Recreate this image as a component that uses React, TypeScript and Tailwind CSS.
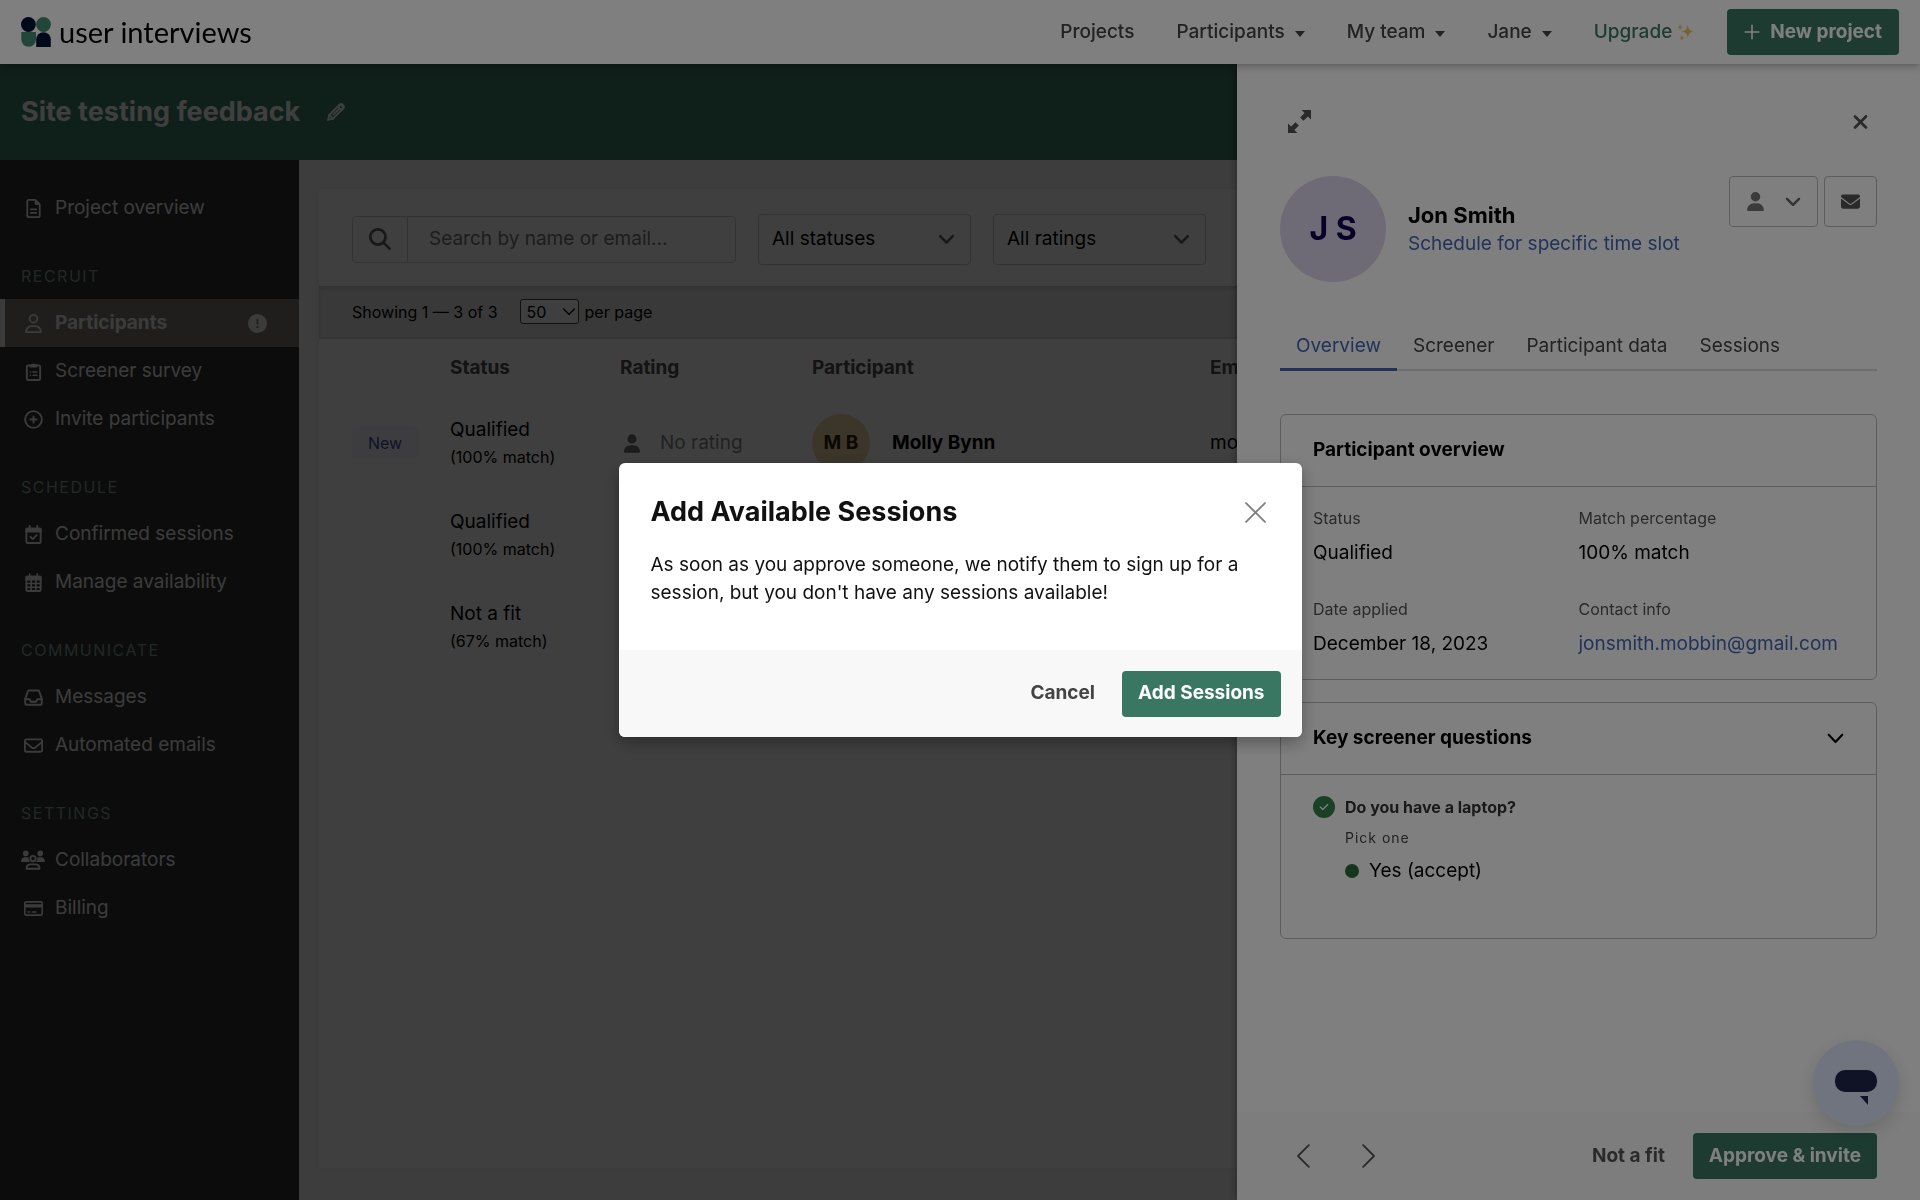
import React, { useState } from 'react';
import {
  FaCheck,
  FaCircleExclamation,
  FaEnvelope,
  FaMagnifyingGlass,
  FaRegCreditCard,
  FaRegEnvelope,
  FaRegFileLines,
  FaRegUser,
  FaUser,
  FaXmark,
} from 'react-icons/fa6';

type IconProps = { className?: string };

const Stroke: React.FC<IconProps & { children: React.ReactNode; width?: number }> = ({
  className,
  children,
  width = 2,
}) => (
  <svg
    viewBox="0 0 20 20"
    className={className}
    fill="none"
    stroke="currentColor"
    strokeWidth={width}
    strokeLinecap="round"
    strokeLinejoin="round"
    aria-hidden="true"
  >
    {children}
  </svg>
);

const ChevronIcon = ({ className }: IconProps) => (
  <Stroke className={className} width={3}>
    <path d="m2.500 6 7.500 7.500 7.500-7.500" />
  </Stroke>
);

const ClipboardIcon = ({ className }: IconProps) => (
  <Stroke className={className}>
    <rect x="3" y="3.5" width="14" height="15.5" rx="1.5" />
    <path d="M6.5 5V3.5h1.7a1.9 1.9 0 0 1 3.6 0h1.7V5z" fill="currentColor" strokeWidth={1.5} />
    <path d="M6.6 10.5h.2M9.5 10.5h4M6.6 14h.2M9.5 14h4" strokeWidth={1.6} />
  </Stroke>
);

const CirclePlusIcon = ({ className }: IconProps) => (
  <Stroke className={className}>
    <circle cx="10" cy="10" r="8.8" />
    <path d="M10 6.7v6.6M6.7 10h6.6" />
  </Stroke>
);

const CalendarCheckIcon = ({ className }: IconProps) => (
  <Stroke className={className}>
    <rect x="2.5" y="4" width="15" height="15" rx="1.5" />
    <path d="M2.5 4h15v3h-15z" fill="currentColor" />
    <path d="M6 1v3M14 1v3M6.8 12.5l2.3 2.3 4.2-4.2" />
  </Stroke>
);

const CalendarGridIcon = ({ className }: IconProps) => (
  <Stroke className={className}>
    <rect x="2.5" y="4" width="15" height="15" rx="1.5" />
    <path d="M2.5 4h15v3h-15z" fill="currentColor" />
    <path d="M6 1v3M14 1v3M2.5 11h15M2.5 15h15M7.5 7v12M12.5 7v12" strokeWidth={1.7} />
  </Stroke>
);

const InboxIcon = ({ className }: IconProps) => (
  <Stroke className={className}>
    <path d="M1.3 11.5 4 3.6a1.4 1.4 0 0 1 1.3-.9h9.4a1.4 1.4 0 0 1 1.3.9l2.7 7.9v4.8a1.3 1.3 0 0 1-1.3 1.3H2.6a1.3 1.3 0 0 1-1.3-1.3z" />
    <path d="M1.3 11.8h4.6l1.4 2.6h5.4l1.4-2.6h4.6" />
  </Stroke>
);

const UsersIcon = ({ className }: IconProps) => (
  <svg viewBox="0 0 24 20" className={className} fill="currentColor" aria-hidden="true">
    <circle cx="4.8" cy="3.4" r="2.8" />
    <circle cx="19.2" cy="3.4" r="2.8" />
    <path d="M0 12c0-2.800 1.500-4.800 4-4.800h2c.6 0 1.100.1 1.600.4A5 5 0 0 0 9 12zM24 12c0-2.800-1.500-4.800-4-4.800h-2c-.6 0-1.100.1-1.600.4A5 5 0 0 1 15 12z" />
    <g fill="none" stroke="currentColor" strokeWidth="1.9" strokeLinejoin="round">
      <circle cx="12" cy="8.600" r="2.700" />
      <path d="M5.500 18.800c0-2.600 1.700-4.400 4.200-4.400h4.600c2.500 0 4.200 1.800 4.200 4.400z" />
    </g>
  </svg>
);

const PencilIcon = ({ className }: IconProps) => (
  <Stroke className={className} width={1.8}>
    <path d="m2 18 1.300-5L13.800 2.500a1.800 1.800 0 0 1 2.500 0l1.200 1.200a1.800 1.800 0 0 1 0 2.500L7 16.700z" />
    <path d="m12 4.500 3.500 3.500 2-2.500-3-3zM7.500 12.500l5-5M3.300 13 7 16.700" />
  </Stroke>
);

const ExpandIcon = ({ className }: IconProps) => (
  <svg viewBox="0 0 22 22" className={className} aria-hidden="true">
    <path d="M13 0h9v9l-2.900-2.900-4.300 4.300-3.200-3.200 4.300-4.300zM9 22H0v-9l2.900 2.900 4.300-4.300 3.200 3.200-4.300 4.300z" fill="currentColor" />
  </svg>
);

const SparklesIcon = ({ className }: IconProps) => (
  <svg viewBox="0 0 20 20" className={className} fill="#e8c865" aria-hidden="true">
    <path d="M12.500 2c1 5.500 2 6.500 7.500 7.500-5.500 1-6.500 2-7.500 7.500-1-5.500-2-6.500-7.500-7.500 5.500-1 6.500-2 7.500-7.500zM4 1c.5 2.500 1 3 3.500 3.500C5 5 4.500 5.500 4 8 3.500 5.500 3 5 .5 4.500 3 4 3.500 3.500 4 1zM6 13c.5 2.600 1 3 3.300 3.500C7 17 6.500 17.500 6 20c-.5-2.500-1-3-3.300-3.500C5 16 5.500 15.600 6 13z" />
  </svg>
);

const LogoMark = () => (
  <svg viewBox="0 0 30 30" className="h-[30px] w-[30px]" aria-hidden="true">
    <circle cx="7.400" cy="7.500" r="7.400" fill="#001234" />
    <circle cx="22.500" cy="7.500" r="7.400" fill="#458c70" />
    <path d="M.3 15H15v7.500a7.350 7.350 0 0 1-14.700 0z" fill="#458c70" />
    <path d="M15.200 30v-7.500a7.300 7.300 0 0 1 14.600 0V30z" fill="#001234" />
  </svg>
);

interface NavItem {
  label: string;
  icon: React.ComponentType<IconProps>;
  active?: boolean;
}

const sections: { title?: string; items: NavItem[] }[] = [
  { items: [{ label: 'Project overview', icon: FaRegFileLines }] },
  {
    title: 'Recruit',
    items: [
      { label: 'Participants', icon: FaRegUser, active: true },
      { label: 'Screener survey', icon: ClipboardIcon },
      { label: 'Invite participants', icon: CirclePlusIcon },
    ],
  },
  {
    title: 'Schedule',
    items: [
      { label: 'Confirmed sessions', icon: CalendarCheckIcon },
      { label: 'Manage availability', icon: CalendarGridIcon },
    ],
  },
  {
    title: 'Communicate',
    items: [
      { label: 'Messages', icon: InboxIcon },
      { label: 'Automated emails', icon: FaRegEnvelope },
    ],
  },
  {
    title: 'Settings',
    items: [
      { label: 'Collaborators', icon: UsersIcon },
      { label: 'Billing', icon: FaRegCreditCard },
    ],
  },
];

const rows = [
  { status: 'Qualified', match: '(100% match)', isNew: true, name: 'Molly Bynn', initials: 'M B', email: 'mo…' },
  { status: 'Qualified', match: '(100% match)' },
  { status: 'Not a fit', match: '(67% match)' },
];

const tabs = ['Overview', 'Screener', 'Participant data', 'Sessions'];

const Caret = () => (
  <span className="mt-1 border-x-[5px] border-t-[6px] border-x-transparent border-t-current" />
);

const Header = () => (
  <header className="relative z-30 flex h-16 shrink-0 items-center justify-between bg-white px-[21px] shadow-[0_2px_8px_rgba(0,0,0,0.3)]">
    <a href="#home" className="flex items-center gap-2 font-['Lato',sans-serif] text-[29px] leading-8 text-black">
      <LogoMark />
      user interviews
    </a>
    <nav className="flex items-center text-[19px] font-medium text-[#444]">
      <a href="#projects" className="mr-[42px]">Projects</a>
      <button className="mr-[42px] flex items-center gap-2.5">Participants <Caret /></button>
      <button className="mr-[42px] flex items-center gap-2.5">My team <Caret /></button>
      <button className="mr-[42px] flex items-center gap-2.5">Jane <Caret /></button>
      <a href="#upgrade" className="mr-8 flex items-center gap-1 text-[#3a7a64]">
        Upgrade <SparklesIcon className="h-[18px] w-[19px]" />
      </a>
      <button className="flex h-[46px] items-center gap-2.5 rounded bg-[#3a7763] px-[17px] font-bold text-white">
        <Stroke className="h-4 w-4"><path d="M10 1.500v17M1.500 10h17" /></Stroke>
        New project
      </button>
    </nav>
  </header>
);

const Sidebar = () => (
  <nav className="w-[299px] shrink-0 bg-[#303030] pt-6 text-[19px] text-[#efefef]">
    {sections.map((section) => (
      <section key={section.items[0].label}>
        {section.title && (
          <h2 className="px-[21px] pt-[33px] pb-3 text-[16px] leading-[22px] tracking-[1.5px] text-[#86a097] uppercase">
            {section.title}
          </h2>
        )}
        {section.items.map(({ label, icon: Icon, active }) => (
          <a
            key={label}
            href="#nav"
            className={
              active
                ? 'flex h-12 items-center border-l-[5px] border-[#efefef] bg-[#7c7b76] pr-8 pl-4 font-bold'
                : 'flex h-12 items-center pr-8 pl-[21px]'
            }
          >
            <span className="mr-[10px] flex w-6 justify-center">
              <Icon className={label === 'Collaborators' ? 'h-5 w-6' : 'h-[19px] w-auto min-w-[15px]'} />
            </span>
            {label}
            {active && <FaCircleExclamation className="ml-auto h-[19px] w-[19px]" />}
          </a>
        ))}
      </section>
    ))}
  </nav>
);

const FilterSelect: React.FC<{ label: string }> = ({ label }) => (
  <div className="relative w-[213px]">
    <select
      aria-label={label}
      className="h-[51px] w-full appearance-none rounded border border-[#ccc] bg-white pl-[13px] text-[19px] text-black"
    >
      <option>{label}</option>
    </select>
    <ChevronIcon className="pointer-events-none absolute top-[17px] right-4 h-[17px] w-[17px] text-[#666]" />
  </div>
);

const ParticipantList = () => (
  <main className="flex min-w-0 flex-1 flex-col bg-[#f5f5f5] px-5 pt-[29px] pb-8">
    <div className="flex-1 overflow-hidden rounded bg-white shadow-[0_0_6px_rgba(0,0,0,0.06)]">
      <div className="flex h-[97px] items-center gap-[22px] px-[33px] pt-[3px]">
        <div className="flex h-[47px] w-[384px] rounded border border-[#ccc]">
          <button aria-label="Search" className="flex w-[55px] items-center justify-center border-r border-[#ccc] text-[#666]">
            <FaMagnifyingGlass className="h-[22px] w-[22px]" />
          </button>
          <input
            type="search"
            aria-label="Search by name or email"
            placeholder="Search by name or email..."
            className="min-w-0 flex-1 px-[21px] text-[19px] placeholder:text-[#757575]"
          />
        </div>
        <FilterSelect label="All statuses" />
        <FilterSelect label="All ratings" />
      </div>
      <div className="flex h-[53px] items-center border-b-2 border-[#d0d0d0] bg-[#e4e4e4] px-[33px] text-[16px] text-black shadow-[inset_0_3px_3px_rgba(0,0,0,0.1)]">
        Showing 1 — 3 of 3
        <div className="relative mr-1.5 ml-[22px]">
          <select id="per-page" className="block h-[25px] w-[59px] appearance-none rounded-[3px] border border-[#444] bg-white pl-1.5 text-[16px] leading-[22px]">
            <option>50</option>
          </select>
          <Stroke className="pointer-events-none absolute top-[7px] right-1 h-3 w-3" width={2.2}>
            <path d="M1 5l9 9 9-9" />
          </Stroke>
        </div>
        <label htmlFor="per-page">per page</label>
      </div>
      <table className="w-full min-w-[1580px] table-fixed text-left text-[19px] text-black">
        <colgroup>
          <col className="w-[131px]" />
          <col className="w-[170px]" />
          <col className="w-[192px]" />
          <col className="w-[398px]" />
          <col />
        </colgroup>
        <thead>
          <tr className="h-[58px] text-[#4c4c4c]">
            <td />
            <th scope="col">Status</th>
            <th scope="col">Rating</th>
            <th scope="col">Participant</th>
            <th scope="col">Email</th>
          </tr>
        </thead>
        <tbody>
          {rows.map((row, i) => (
            <tr key={i} className="h-[92px]">
              <td className="pl-[33px]">
                {row.isNew && (
                  <span className="inline-block rounded bg-[#f5f6fc] px-4 py-1 text-[16px] leading-6 text-[#43489f]">New</span>
                )}
              </td>
              <td>
                <div className="leading-7">{row.status}</div>
                <div className="text-[16px] leading-[26px]">{row.match}</div>
              </td>
              <td>
                {row.name && (
                  <span className="flex items-center gap-5 pl-1 text-[#868686]">
                    <FaUser className="h-[19px] w-4 text-[#707070]" /> No rating
                  </span>
                )}
              </td>
              <td>
                {row.name && (
                  <span className="flex items-center gap-[22px] font-bold">
                    <span className="flex h-[58px] w-[58px] items-center justify-center rounded-full bg-[#f0d8a8] text-[#332200]">
                      {row.initials}
                    </span>
                    {row.name}
                  </span>
                )}
              </td>
              <td>{row.email}</td>
            </tr>
          ))}
        </tbody>
      </table>
    </div>
  </main>
);

const Field: React.FC<{ label: string; children: React.ReactNode }> = ({ label, children }) => (
  <div>
    <dt className="text-[16px] leading-[26px] text-[#555]">{label}</dt>
    <dd className="mt-[7px] leading-[30px] text-black">{children}</dd>
  </div>
);

const Drawer = () => (
  <aside className="fixed top-16 right-0 bottom-0 z-20 flex w-[683px] max-w-full flex-col bg-white text-[19px] shadow-[0_0_8px_rgba(0,0,0,0.4)]">
    <div className="flex-1 px-[43px]">
      <div className="flex items-center justify-between px-2 pt-[46px] text-[#555]">
        <button aria-label="Expand"><ExpandIcon className="h-[23px] w-[23px]" /></button>
        <button aria-label="Close panel"><FaXmark className="h-[22px] w-[17px]" /></button>
      </div>
      <div className="mt-[43px] flex items-start">
        <div className="flex h-[106px] w-[106px] items-center justify-center rounded-full bg-[#dcd6ee] text-[32px] font-bold text-[#0d0050]">
          J S
        </div>
        <div className="ml-[22px] pt-[25px]">
          <h2 className="text-[22px] leading-[29px] font-bold text-black">Jon Smith</h2>
          <a href="#slot" className="block leading-7 text-[#4665b5]">Schedule for specific time slot</a>
        </div>
        <div className="ml-auto flex gap-1.5">
          <button aria-label="Rating" className="flex h-[51px] items-center gap-5 rounded border border-[#bbb] px-4 text-[#777]">
            <FaUser className="h-[19px] w-[19px]" />
            <ChevronIcon className="h-4 w-4 text-[#666]" />
          </button>
          <button aria-label="Message" className="flex h-[51px] w-[53px] items-center justify-center rounded border border-[#bbb] text-[#555]">
            <FaEnvelope className="h-[19px] w-[19px]" />
          </button>
        </div>
      </div>
      <div role="tablist" className="mt-[42px] flex border-b-2 border-[#d8dcde]">
        {tabs.map((tab) => (
          <button
            key={tab}
            role="tab"
            aria-selected={tab === 'Overview'}
            className={
              tab === 'Overview'
                ? '-mb-0.5 h-[47px] border-b-[3px] border-[#4665b5] px-4 text-[#4665b5]'
                : 'h-[45px] px-4 text-[#444]'
            }
          >
            {tab}
          </button>
        ))}
      </div>
      <section className="mt-[43px] rounded-md border border-[#bbb]">
        <h3 className="flex h-[72px] items-center border-b border-[#bbb] px-8 font-bold text-black">Participant overview</h3>
        <dl className="grid grid-cols-2 gap-y-7 px-8 pt-[18px] pb-5">
          <Field label="Status">Qualified</Field>
          <Field label="Match percentage">100% match</Field>
          <Field label="Date applied">December 18, 2023</Field>
          <Field label="Contact info">
            <a href="mailto:jonsmith.mobbin@gmail.com" className="text-[#4665b5]">jonsmith.mobbin@gmail.com</a>
          </Field>
        </dl>
      </section>
      <section className="mt-[22px] rounded-md border border-[#bbb]">
        <h3 className="border-b border-[#bbb] font-bold text-black">
          <button className="flex h-[71px] w-full items-center justify-between px-8">
            Key screener questions
            <Stroke className="h-[17px] w-[17px]" width={2.5}><path d="M2 5.500l8 8.500 8-8.500" /></Stroke>
          </button>
        </h3>
        <div className="flex gap-2.5 px-8 pt-[18px] pb-[53px]">
          <span className="mt-[3px] flex h-[22px] w-[22px] items-center justify-center rounded-full bg-[#34804a] text-white">
            <FaCheck className="h-[10px] w-[10px]" />
          </span>
          <div>
            <p className="text-[16px] leading-7 font-bold text-[#333]">Do you have a laptop?</p>
            <p className="mt-[3px] text-[14px] leading-7 tracking-[1px] text-[#444]">Pick one</p>
            <p className="mt-[5px] flex items-center leading-7 text-black">
              <span className="mr-[10px] h-3.5 w-3.5 rounded-full bg-[#2a6b3a]" />
              Yes (accept)
            </p>
          </div>
        </div>
      </section>
    </div>
    <footer className="flex h-[88px] items-center bg-[#fafafa] px-[43px] font-bold text-[#555]">
      <button aria-label="Previous participant" className="ml-3">
        <Stroke className="h-6 w-6" width={1.5}><path d="M14 1 5 10l9 9" /></Stroke>
      </button>
      <button aria-label="Next participant" className="ml-10">
        <Stroke className="h-6 w-6" width={1.5}><path d="m6 1 9 9-9 9" /></Stroke>
      </button>
      <button className="mr-7 ml-auto">Not a fit</button>
      <button className="h-[46px] rounded bg-[#3a7763] px-4 text-white">Approve &amp; invite</button>
    </footer>
  </aside>
);

const SessionsModal: React.FC<{ onClose: () => void }> = ({ onClose }) => (
  <div className="fixed inset-0 z-50 flex items-center justify-center bg-black/50">
    <div
      role="dialog"
      aria-modal="true"
      aria-labelledby="sessions-title"
      className="w-[683px] max-w-full overflow-hidden rounded-md bg-white shadow-[0_6px_16px_rgba(0,0,0,0.3)]"
    >
      <div className="flex items-center justify-between px-8 pt-8">
        <h2 id="sessions-title" className="text-[27px] leading-[34px] font-bold text-[#111]">Add Available Sessions</h2>
        <button aria-label="Close" onClick={onClose} className="mr-1 text-[#808080]">
          <Stroke className="h-[21px] w-[21px]" width={1.8}><path d="M1 1l18 18M19 1 1 19" /></Stroke>
        </button>
      </div>
      <p className="px-8 pt-[22px] pb-[43px] text-[19px] leading-7 text-[#111]">
        As soon as you approve someone, we notify them to sign up for a session, but you don't have any sessions available!
      </p>
      <div className="flex h-[87px] items-center justify-end gap-[27px] bg-[#f8f8f8] px-[21px] text-[19px] font-bold">
        <button onClick={onClose} className="text-[#444]">Cancel</button>
        <button className="h-[46px] rounded bg-[#3a7763] px-4 text-white">Add Sessions</button>
      </div>
    </div>
  </div>
);

export default function App() {
  const [modalOpen, setModalOpen] = useState(true);

  return (
    <div className="flex min-h-screen flex-col overflow-hidden font-['Inter',sans-serif]">
      <Header />
      <div className="flex h-24 shrink-0 items-center bg-[#3c7c68] px-[21px] text-white">
        <h1 className="text-[27px] font-bold">Site testing feedback</h1>
        <button aria-label="Rename project" className="ml-[26px]">
          <PencilIcon className="h-5 w-5" />
        </button>
      </div>
      <div className="flex flex-1">
        <Sidebar />
        <ParticipantList />
      </div>

      <div className="fixed inset-0 top-16 z-10 bg-black/50" />
      <Drawer />
      <button
        aria-label="Open chat"
        className="fixed right-[21px] bottom-[74px] z-20 flex h-[86px] w-[86px] items-center justify-center rounded-full bg-[#e0e8ff] shadow-[0_6px_18px_rgba(0,0,0,0.15)]"
      >
        <svg viewBox="0 0 44 36" className="mt-2.5 h-9 w-11" fill="#20254a" aria-hidden="true">
          <rect x="1" y="0" width="42" height="22" rx="10" />
          <path d="M26 26h8v9z" />
        </svg>
      </button>
      {modalOpen && <SessionsModal onClose={() => setModalOpen(false)} />}
    </div>
  );
}
